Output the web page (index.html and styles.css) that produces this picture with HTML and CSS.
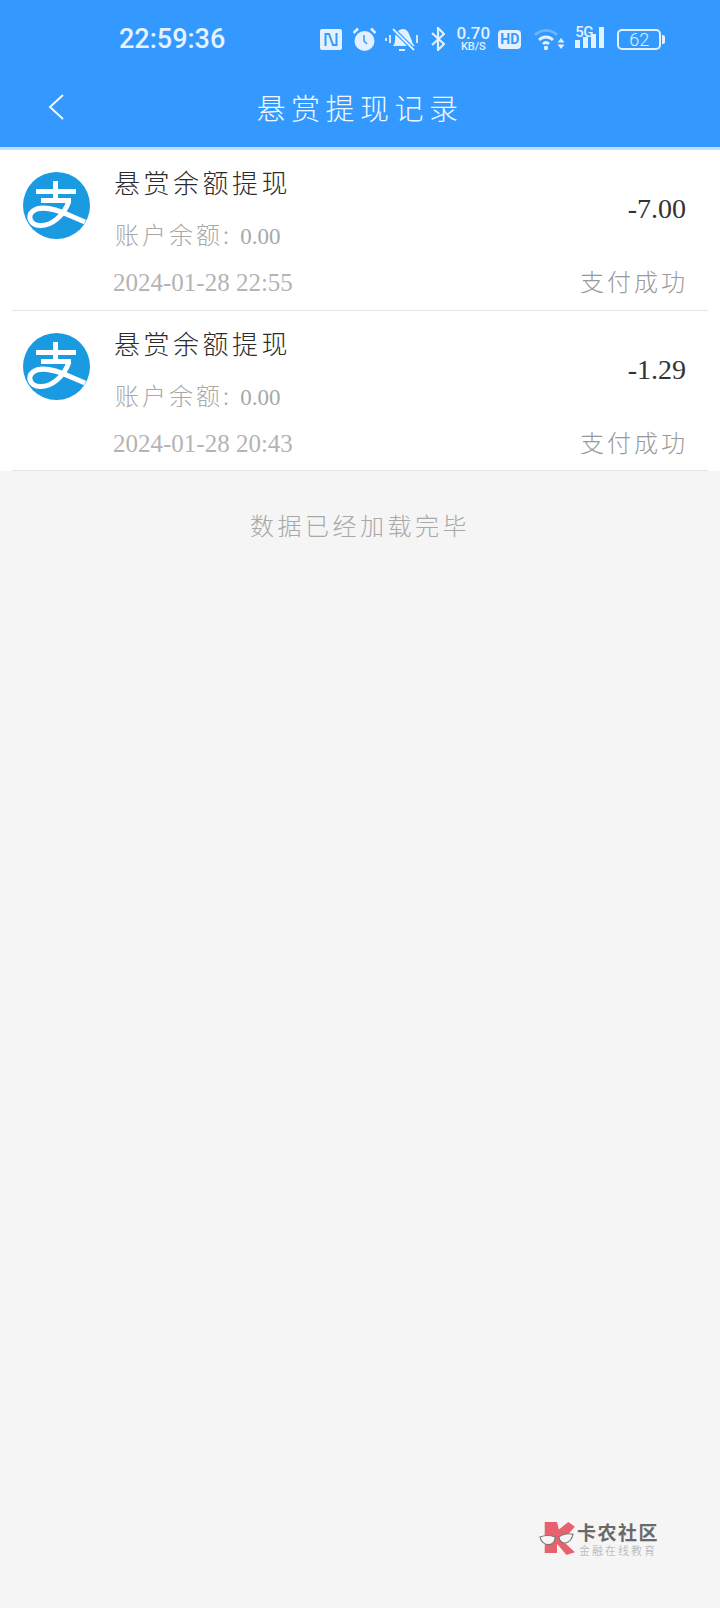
FILE: index.html
```html
<!DOCTYPE html>
<html lang="zh-CN">
<head>
  <meta charset="UTF-8" />
  <meta name="viewport" content="width=device-width, initial-scale=1.0"/>
  <title>悬赏提现记录</title>
  <link rel="stylesheet" href="styles.css">
</head>
<body>
  <div class="page">
    <div class="header">
      <div class="statusbar">
        <div class="time">22:59:36</div>
        <div class="status-icons">
          <svg class="ic-nfc" viewBox="0 0 22 21"><rect width="22" height="21" rx="2" fill="#e3f0ff"/><path d="M5.500 17V5h3.500l4 11h3.500V4" fill="none" stroke="#3399ff" stroke-width="2"/></svg>
          <svg class="ic-alarm" viewBox="0 0 23 24"><circle cx="11.500" cy="14" r="10" fill="#e3f0ff"/><path d="M11 8v6l3 3" fill="none" stroke="#3399ff" stroke-width="1.500"/><path d="M0.500 6l4.500-4.500M22.500 6L18 1.500" stroke="#e3f0ff" stroke-width="2.600" fill="none"/></svg>
          <svg class="ic-bell" viewBox="0 0 35 25"><path d="M8 19c2-2 2-5 2-8 0-5 4-9 8-9 3 0 5 2 6 5l3 7c0 2 1 3 3 5z" fill="#e3f0ff"/><path d="M14 23h6" stroke="#e3f0ff" stroke-width="2"/><path d="M8 2l21 21" stroke="#3399ff" stroke-width="4"/><path d="M8 2l21 21" stroke="#e3f0ff" stroke-width="1.800"/><path d="M1 11v3M5 8v8M32 8v8" stroke="#e3f0ff" stroke-width="1.800"/></svg>
          <svg class="ic-bt" viewBox="0 0 14 24"><path d="M1 6l12 11-6 6V1l6 6L1 18" fill="none" stroke="#e3f0ff" stroke-width="2.200"/></svg>
          <div class="speed"><span class="speed-num">0.70</span><span class="speed-unit">KB/S</span></div>
          <div class="hd">HD</div>
          <svg class="ic-wifi" viewBox="0 0 30 24"><path d="M1 8c6-6 16-6 22 0" fill="none" stroke="#e3f0ff" stroke-opacity=".35" stroke-width="2.600"/><path d="M5 13c4-4 10-4 14 0M9 17c2-2 4-2 6 0" fill="none" stroke="#e3f0ff" stroke-width="2.800"/><circle cx="12" cy="21" r="2.200" fill="#e3f0ff"/><path d="M27 11l3.500 4.500h-7zM27 22l3.500-4.500h-7z" fill="#e3f0ff"/></svg>
          <div class="signal">
            <span class="signal-label">5G</span>
            <svg class="ic-bars" viewBox="0 0 31 24"><path d="M1 13h5v8H1zM9 10h5v11H9zM17 7h5v14h-5zM25 0h5v21h-5z" fill="#e3f0ff"/></svg>
          </div>
          <div class="battery"><span class="battery-level">62</span></div>
        </div>
      </div>
      <div class="navbar">
        <svg class="back" viewBox="0 0 16 26"><path d="M15 1L2 13l13 12" fill="none" stroke="#f2f8ff" stroke-width="2"/></svg>
        <div class="nav-title">悬赏提现记录</div>
      </div>
    </div>

    <div class="list">
      <div class="row">
        <svg class="alipay" viewBox="0 0 67 67"><circle cx="33.500" cy="33.500" r="33.500" fill="#1a9ae0"/><path d="M13 19.500h40M32.500 9v20M18 28.500h30" stroke="#fff" stroke-width="5" fill="none"/><path d="M46 29C41 44 28 54 17 53.500 7 53 4 44 10 39c8-6 25-1 38 5l14 6" stroke="#fff" stroke-width="5" fill="none"/></svg>
        <div class="item-title">悬赏余额提现</div>
        <div class="item-amount">-7.00</div>
        <div class="item-balance">账户余额: <span class="num">0.00</span></div>
        <div class="item-date">2024-01-28 22:55</div>
        <div class="item-status">支付成功</div>
      </div>
      <div class="row">
        <svg class="alipay" viewBox="0 0 67 67"><circle cx="33.500" cy="33.500" r="33.500" fill="#1a9ae0"/><path d="M13 19.500h40M32.500 9v20M18 28.500h30" stroke="#fff" stroke-width="5" fill="none"/><path d="M46 29C41 44 28 54 17 53.500 7 53 4 44 10 39c8-6 25-1 38 5l14 6" stroke="#fff" stroke-width="5" fill="none"/></svg>
        <div class="item-title">悬赏余额提现</div>
        <div class="item-amount">-1.29</div>
        <div class="item-balance">账户余额: <span class="num">0.00</span></div>
        <div class="item-date">2024-01-28 20:43</div>
        <div class="item-status">支付成功</div>
      </div>
    </div>

    <div class="list-end">数据已经加载完毕</div>

    <div class="watermark">
      <svg class="wm-logo" viewBox="-2 0 38 36"><path d="M4 1h13l2 8 10-8 7 5-9 10-5 4 14 13-9 3-10-12v10H4z" fill="#e8626e"/><path d="M-1 17c5-2 11-2 16 0 0 5-3 8-7 8s-8-3-9-8zM34 14c-5-1-11 0-15 3 1 5 4 7 8 6s6-5 7-9z" fill="#f5f5f5" stroke="#777" stroke-width="1.200"/></svg>
      <div class="wm-text">
        <div class="wm-name">卡农社区</div>
        <div class="wm-sub">金融在线教育</div>
      </div>
    </div>
  </div>
</body>
</html>
```

FILE: styles.css
```css
* {
  box-sizing: border-box;
}

body {
  margin: 0;
  padding: 0;
  background: #f5f5f5;
  font-family: "Noto Sans CJK SC", "Noto Sans", sans-serif;
  font-weight: 300;
}

.page {
  position: relative;
  width: 720px;
  height: 1608px;
  overflow: hidden;
}

.header {
  background: #3399ff;
  border-bottom: 3px solid #c6def6;
}

.statusbar {
  display: flex;
  align-items: center;
  height: 78px;
  padding-left: 119px;
}

.time {
  font-family: Roboto, sans-serif;
  font-weight: 500;
  font-size: 27px;
  color: #e6f2ff;
}

.status-icons {
  display: flex;
  align-items: center;
  margin-left: 95px;
  color: #e3f0ff;
  font-family: Roboto, sans-serif;
}

.status-icons svg {
  display: block;
  flex: none;
}

.ic-nfc {
  width: 22px;
  height: 21px;
}

.ic-alarm {
  width: 23px;
  height: 24px;
  margin-left: 11px;
}

.ic-bell {
  width: 35px;
  height: 25px;
  margin-left: 9px;
}

.ic-bt {
  width: 14px;
  height: 24px;
  margin-left: 11px;
}

.speed {
  display: flex;
  flex-direction: column;
  align-items: center;
  width: 34px;
  margin-left: 11px;
  font-weight: 500;
}

.speed-num {
  font-size: 17px;
  line-height: 15px;
}

.speed-unit {
  font-size: 11px;
  line-height: 11px;
}

.hd {
  width: 23px;
  height: 19px;
  margin-left: 8px;
  border-radius: 4px;
  background: #e3f0ff;
  color: #3399ff;
  font-size: 14px;
  font-weight: 700;
  line-height: 19px;
  text-align: center;
}

.ic-wifi {
  width: 30px;
  height: 24px;
  margin-left: 13px;
}

.signal {
  position: relative;
  width: 31px;
  height: 24px;
  margin-left: 10px;
}

.signal-label {
  position: absolute;
  left: 1px;
  top: -1px;
  font-size: 15px;
  font-weight: 500;
  line-height: 13px;
  letter-spacing: -0.5px;
}

.ic-bars {
  width: 31px;
  height: 24px;
}

.battery {
  position: relative;
  width: 44px;
  height: 21px;
  margin-left: 12px;
  border: 2px solid #e3f0ff;
  border-radius: 5px;
  text-align: center;
}

.battery::after {
  content: "";
  position: absolute;
  right: -6px;
  top: 4px;
  width: 3px;
  height: 9px;
  border-radius: 0 2px 2px 0;
  background: #e3f0ff;
}

.battery-level {
  display: block;
  font-size: 18px;
  line-height: 17px;
}

.navbar {
  display: grid;
  grid-template-columns: 1fr auto 1fr;
  align-items: center;
  height: 69px;
  padding: 0 48px 12px;
}

.back {
  width: 16px;
  height: 26px;
}

.nav-title {
  font-size: 29px;
  letter-spacing: 5.5px;
  color: #f2f8ff;
  white-space: nowrap;
}

.list {
  background: #fff;
}

.row {
  display: grid;
  grid-template-columns: 67px 1fr auto;
  grid-template-rows: 44px 60px 34px;
  column-gap: 25px;
  height: 161px;
  margin: 0 12px;
  padding: 12px 22px 0 11px;
  border-bottom: 1px solid #e6e6e6;
}

.row:last-child {
  height: 160px;
}

.alipay {
  grid-row: 1 / 3;
  width: 67px;
  height: 67px;
  margin-top: 10px;
}

.item-title {
  margin-left: -1px;
  font-size: 26px;
  line-height: 40px;
  letter-spacing: 3.5px;
  color: #2b2b2b;
}

.item-amount {
  grid-row: 1 / 3;
  grid-column: 3;
  margin-top: 33px;
  font-family: "Liberation Serif", serif;
  font-size: 28px;
  line-height: 28px;
  color: #333;
  text-align: right;
}

.item-balance {
  grid-column: 2;
  font-size: 24px;
  line-height: 56px;
  letter-spacing: 3px;
  color: #a8a8a8;
}

.num {
  font-family: "Liberation Serif", serif;
  font-size: 23px;
  letter-spacing: 0;
}

.item-date {
  grid-column: 2;
  margin-left: -2px;
  font-family: "Liberation Serif", serif;
  font-size: 25px;
  line-height: 34px;
  color: #b4b4b4;
}

.item-status {
  grid-column: 3;
  margin-right: -2px;
  font-size: 24px;
  line-height: 30px;
  letter-spacing: 3px;
  color: #999;
  text-align: right;
}

.list-end {
  padding-top: 36px;
  font-size: 24px;
  line-height: 36px;
  letter-spacing: 3.5px;
  color: #a8a8a8;
  text-align: center;
}

.watermark {
  position: absolute;
  left: 539px;
  top: 1521px;
  display: flex;
  gap: 2px;
}

.wm-logo {
  width: 36px;
  height: 34px;
}

.wm-name {
  font-size: 19px;
  font-weight: 700;
  line-height: 22px;
  letter-spacing: 1.5px;
  color: #6a6a6a;
}

.wm-sub {
  margin-left: 2px;
  font-size: 11px;
  line-height: 14px;
  letter-spacing: 2px;
  color: #aaa;
}
```
